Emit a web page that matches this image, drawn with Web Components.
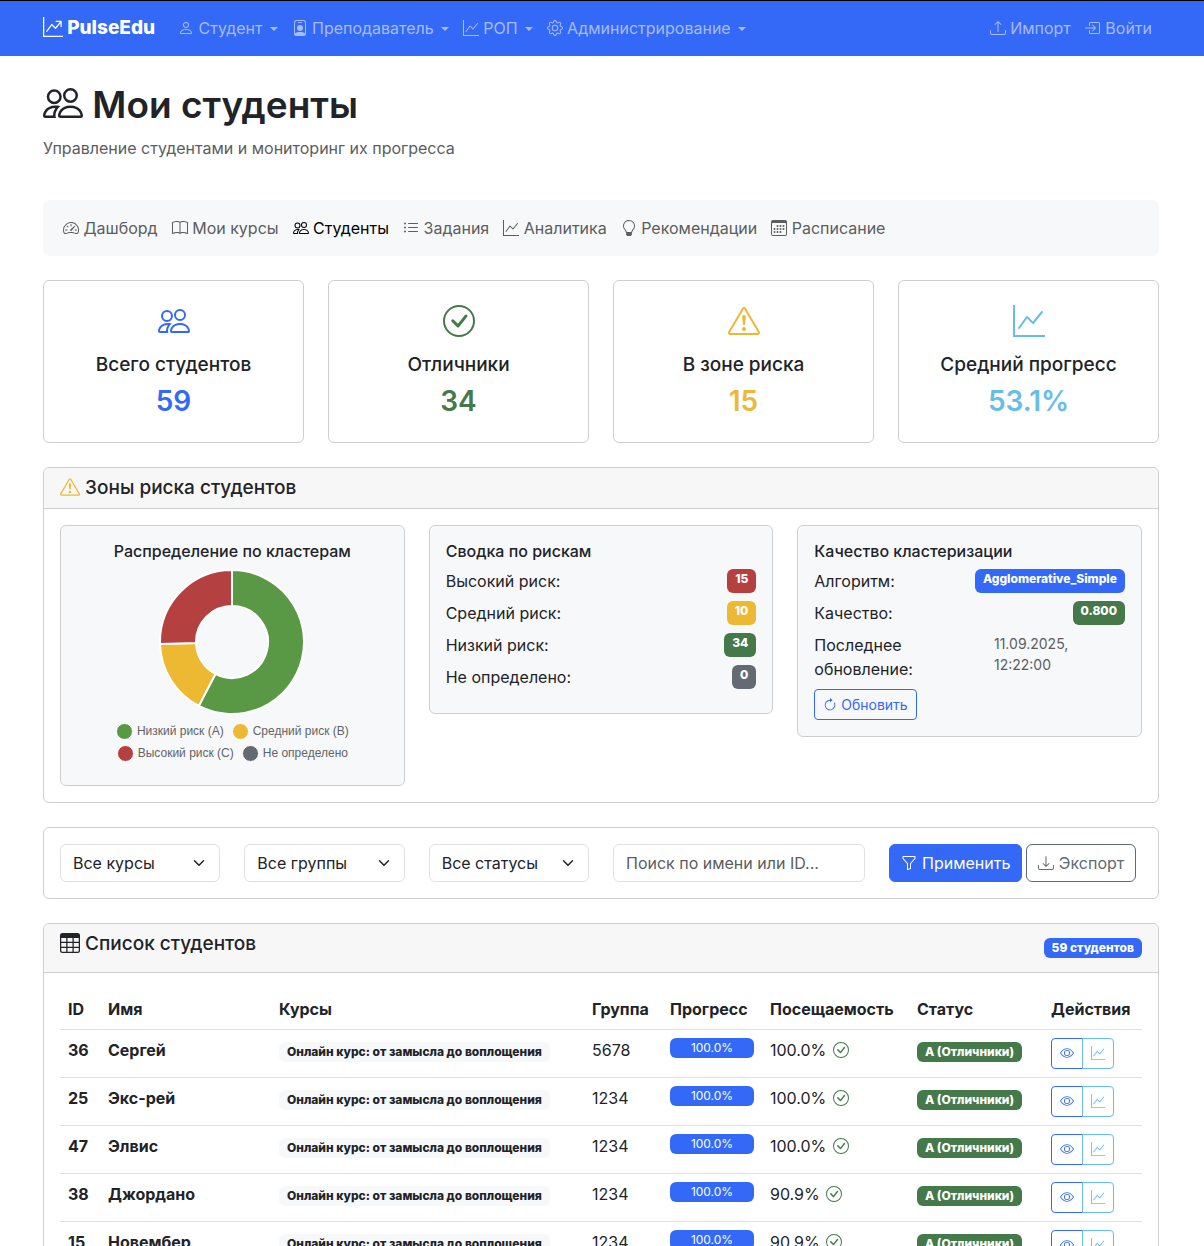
<!DOCTYPE html>
<html lang="ru">
<head>
<meta charset="utf-8">
<meta name="viewport" content="width=device-width, initial-scale=1">
<title>PulseEdu — Мои студенты</title>
<style>
:root{--blue:#3468f7;--green:#45794a;--yellow:#edb932;--red:#b44040;--gray:#646a71;--info:#66bdea;--ink:#212328;--muted:#5b5d60;--soft:#f7f8fa;--line:#cdcecf;--rule:#dfe1e4}
body{margin:0;background:#fff;color:var(--ink);font:400 16px/24px Inter,"Noto Sans",sans-serif}
</style>
</head>
<body>
<pulse-app></pulse-app>
<script>
const ICONS={
people:'<path d="M15 14s1 0 1-1-1-4-5-4-5 3-5 4 1 1 1 1zm-7.978-1L7 12.996c.001-.264.167-1.03.76-1.72C8.312 10.629 9.282 10 11 10c1.717 0 2.687.63 3.24 1.276.593.69.758 1.457.76 1.72l-.008.002-.014.002zM11 7a2 2 0 1 0 0-4 2 2 0 0 0 0 4m3-2a3 3 0 1 1-6 0 3 3 0 0 1 6 0M6.936 9.28a6 6 0 0 0-1.23-.247A7 7 0 0 0 5 9c-4 0-5 3-5 4q0 1 1 1h4.216A2.24 2.24 0 0 1 5 13c0-1.01.377-2.042 1.09-2.904.243-.294.526-.569.846-.816M4.92 10A5.5 5.5 0 0 0 4 13H1c0-.26.164-1.03.76-1.724.545-.636 1.492-1.256 3.16-1.275ZM1.5 5.5a3 3 0 1 1 6 0 3 3 0 0 1-6 0m3-2a2 2 0 1 0 0 4 2 2 0 0 0 0-4"/>',
person:'<path d="M8 8a3 3 0 1 0 0-6 3 3 0 0 0 0 6m2-3a2 2 0 1 1-4 0 2 2 0 0 1 4 0m4 8c0 1-1 1-1 1H3s-1 0-1-1 1-4 6-4 6 3 6 4m-1-.004c-.001-.246-.154-.986-.832-1.664C11.516 10.68 10.289 10 8 10s-3.516.68-4.168 1.332c-.678.678-.83 1.418-.832 1.664z"/>',
badge:'<path d="M6.5 2a.5.5 0 0 0 0 1h3a.5.5 0 0 0 0-1zM11 8a3 3 0 1 1-6 0 3 3 0 0 1 6 0"/><path d="M4.5 0A2.5 2.5 0 0 0 2 2.5V14a2 2 0 0 0 2 2h8a2 2 0 0 0 2-2V2.5A2.5 2.5 0 0 0 11.5 0zM3 2.5A1.5 1.5 0 0 1 4.5 1h7A1.5 1.5 0 0 1 13 2.5v10.795a4.2 4.2 0 0 0-.776-.492C11.392 12.387 10.063 12 8 12s-3.392.387-4.224.803a4.2 4.2 0 0 0-.776.492z"/>',
graph:'<path fill-rule="evenodd" d="M0 0h1v15h15v1H0zm14.817 3.113a.5.5 0 0 1 .07.704l-4.5 5.5a.5.5 0 0 1-.74.037L7.06 6.767l-3.656 5.027a.5.5 0 0 1-.808-.588l4-5.5a.5.5 0 0 1 .758-.06l2.609 2.61 4.15-5.073a.5.5 0 0 1 .704-.07"/>',
graphArrow:'<path fill-rule="evenodd" d="M0 0h1v15h15v1H0zm10 3.5a.5.5 0 0 1 .5-.5h4a.5.5 0 0 1 .5.5v4a.5.5 0 0 1-1 0V4.9l-3.613 4.417a.5.5 0 0 1-.74.037L7.06 6.767l-3.656 5.027a.5.5 0 0 1-.808-.588l4-5.5a.5.5 0 0 1 .758-.06l2.609 2.61L13.445 4H10.5a.5.5 0 0 1-.5-.5"/>',
gear:'<path d="M8 4.754a3.246 3.246 0 1 0 0 6.492 3.246 3.246 0 0 0 0-6.492M5.754 8a2.246 2.246 0 1 1 4.492 0 2.246 2.246 0 0 1-4.492 0"/><path d="M9.796 1.343c-.527-1.79-3.065-1.79-3.592 0l-.094.319a.873.873 0 0 1-1.255.52l-.292-.16c-1.64-.892-3.433.902-2.54 2.541l.159.292a.873.873 0 0 1-.52 1.255l-.319.094c-1.79.527-1.79 3.065 0 3.592l.319.094a.873.873 0 0 1 .52 1.255l-.16.292c-.892 1.64.901 3.434 2.541 2.54l.292-.159a.873.873 0 0 1 1.255.52l.094.319c.527 1.79 3.065 1.79 3.592 0l.094-.319a.873.873 0 0 1 1.255-.52l.292.16c1.64.893 3.434-.902 2.54-2.541l-.159-.292a.873.873 0 0 1 .52-1.255l.319-.094c1.79-.527 1.79-3.065 0-3.592l-.319-.094a.873.873 0 0 1-.52-1.255l.16-.292c.893-1.64-.902-3.433-2.541-2.54l-.292.159a.873.873 0 0 1-1.255-.52zm-2.633.283c.246-.835 1.428-.835 1.674 0l.094.319a1.873 1.873 0 0 0 2.693 1.115l.291-.16c.764-.415 1.6.42 1.184 1.185l-.159.292a1.873 1.873 0 0 0 1.116 2.692l.318.094c.835.246.835 1.428 0 1.674l-.319.094a1.873 1.873 0 0 0-1.115 2.693l.16.291c.415.764-.42 1.6-1.185 1.184l-.291-.159a1.873 1.873 0 0 0-2.693 1.116l-.094.318c-.246.835-1.428.835-1.674 0l-.094-.319a1.873 1.873 0 0 0-2.692-1.115l-.292.16c-.764.415-1.6-.42-1.184-1.185l.159-.291A1.873 1.873 0 0 0 1.945 8.93l-.319-.094c-.835-.246-.835-1.428 0-1.674l.319-.094A1.873 1.873 0 0 0 3.06 4.377l-.16-.292c-.415-.764.42-1.6 1.185-1.184l.292.159a1.873 1.873 0 0 0 2.692-1.115z"/>',
upload:'<path d="M.5 9.9a.5.5 0 0 1 .5.5v2.5a1 1 0 0 0 1 1h12a1 1 0 0 0 1-1v-2.5a.5.5 0 0 1 1 0v2.5a2 2 0 0 1-2 2H2a2 2 0 0 1-2-2v-2.5a.5.5 0 0 1 .5-.5"/><path d="M7.646 1.146a.5.5 0 0 1 .708 0l3 3a.5.5 0 0 1-.708.708L8.5 2.707V11.5a.5.5 0 0 1-1 0V2.707L5.354 4.854a.5.5 0 1 1-.708-.708z"/>',
download:'<path d="M.5 9.9a.5.5 0 0 1 .5.5v2.5a1 1 0 0 0 1 1h12a1 1 0 0 0 1-1v-2.5a.5.5 0 0 1 1 0v2.5a2 2 0 0 1-2 2H2a2 2 0 0 1-2-2v-2.5a.5.5 0 0 1 .5-.5"/><path d="M7.646 11.854a.5.5 0 0 0 .708 0l3-3a.5.5 0 0 0-.708-.708L8.5 10.293V1.5a.5.5 0 0 0-1 0v8.793L5.354 8.146a.5.5 0 1 0-.708.708z"/>',
login:'<path fill-rule="evenodd" d="M6 3.5a.5.5 0 0 1 .5-.5h8a.5.5 0 0 1 .5.5v9a.5.5 0 0 1-.5.5h-8a.5.5 0 0 1-.5-.5v-2a.5.5 0 0 0-1 0v2A1.5 1.5 0 0 0 6.5 14h8a1.5 1.5 0 0 0 1.5-1.5v-9A1.5 1.5 0 0 0 14.5 2h-8A1.5 1.5 0 0 0 5 3.5v2a.5.5 0 0 0 1 0z" transform="translate(-1 0)"/><path fill-rule="evenodd" d="M11.854 8.354a.5.5 0 0 0 0-.708l-3-3a.5.5 0 1 0-.708.708L10.293 7.5H1.5a.5.5 0 0 0 0 1h8.793l-2.147 2.146a.5.5 0 0 0 .708.708z" transform="translate(-1 0)"/>',
speed:'<path d="M8 4a.5.5 0 0 1 .5.5V6a.5.5 0 0 1-1 0V4.5A.5.5 0 0 1 8 4M3.732 5.732a.5.5 0 0 1 .707 0l.915.914a.5.5 0 1 1-.708.708l-.914-.915a.5.5 0 0 1 0-.707M2 10a.5.5 0 0 1 .5-.5h1.586a.5.5 0 0 1 0 1H2.5A.5.5 0 0 1 2 10m9.5 0a.5.5 0 0 1 .5-.5h1.5a.5.5 0 0 1 0 1H12a.5.5 0 0 1-.5-.5m.754-4.246a.39.39 0 0 0-.527-.02L7.547 9.31a.91.91 0 1 0 1.302 1.258l3.434-4.297a.39.39 0 0 0-.029-.518z"/><path fill-rule="evenodd" d="M0 10a8 8 0 1 1 15.547 2.661c-.442 1.253-1.845 1.602-2.932 1.25C11.309 13.488 9.475 13 8 13c-1.474 0-3.31.488-4.615.911-1.087.352-2.49.003-2.932-1.25A8 8 0 0 1 0 10m8-7a7 7 0 0 0-6.603 9.329c.203.575.923.876 1.68.63C4.397 12.533 6.358 12 8 12s3.604.532 4.923.96c.757.245 1.477-.056 1.68-.631A7 7 0 0 0 8 3"/>',
book:'<path d="M1 2.828c.885-.37 2.154-.769 3.388-.893 1.33-.134 2.458.063 3.112.752v9.746c-.935-.53-2.12-.603-3.213-.493-1.18.12-2.37.461-3.287.811zm7.5-.141c.654-.689 1.782-.886 3.112-.752 1.234.124 2.503.523 3.388.893v9.923c-.918-.35-2.107-.692-3.287-.81-1.094-.111-2.278-.039-3.213.492zM8 1.783C7.015.936 5.587.81 4.287.94c-1.514.153-3.042.672-3.994 1.105A.5.5 0 0 0 0 2.5v11a.5.5 0 0 0 .707.455c.882-.4 2.303-.881 3.68-1.02 1.409-.142 2.59.087 3.223.877a.5.5 0 0 0 .78 0c.633-.79 1.814-1.019 3.222-.877 1.378.139 2.8.62 3.681 1.02A.5.5 0 0 0 16 13.5v-11a.5.5 0 0 0-.293-.455c-.952-.433-2.48-.952-3.994-1.105C10.413.809 8.985.936 8 1.783"/>',
list:'<path fill-rule="evenodd" d="M5 11.5a.5.5 0 0 1 .5-.5h9a.5.5 0 0 1 0 1h-9a.5.5 0 0 1-.5-.5m0-4a.5.5 0 0 1 .5-.5h9a.5.5 0 0 1 0 1h-9a.5.5 0 0 1-.5-.5m0-4a.5.5 0 0 1 .5-.5h9a.5.5 0 0 1 0 1h-9a.5.5 0 0 1-.5-.5m-3 1a1 1 0 1 0 0-2 1 1 0 0 0 0 2m0 4a1 1 0 1 0 0-2 1 1 0 0 0 0 2m0 4a1 1 0 1 0 0-2 1 1 0 0 0 0 2"/>',
bulb:'<path d="M2 6a6 6 0 1 1 10.174 4.31c-.203.196-.359.4-.453.619l-.762 1.769A.5.5 0 0 1 10.5 13a.5.5 0 0 1 0 1 .5.5 0 0 1 0 1l-.224.447a1 1 0 0 1-.894.553H6.618a1 1 0 0 1-.894-.553L5.5 15a.5.5 0 0 1 0-1 .5.5 0 0 1 0-1 .5.5 0 0 1-.46-.302l-.761-1.77a2 2 0 0 0-.453-.618A5.98 5.98 0 0 1 2 6m6-5a5 5 0 0 0-3.479 8.592c.263.254.514.564.676.941L5.83 12h4.342l.632-1.467c.162-.377.413-.687.676-.941A5 5 0 0 0 8 1"/>',
calendar:'<path d="M14 0H2a2 2 0 0 0-2 2v12a2 2 0 0 0 2 2h12a2 2 0 0 0 2-2V2a2 2 0 0 0-2-2M1 3.857C1 3.384 1.448 3 2 3h12c.552 0 1 .384 1 .857v10.286c0 .473-.448.857-1 .857H2c-.552 0-1-.384-1-.857z"/><path d="M6.5 7a1 1 0 1 0 0-2 1 1 0 0 0 0 2m3 0a1 1 0 1 0 0-2 1 1 0 0 0 0 2m3 0a1 1 0 1 0 0-2 1 1 0 0 0 0 2m-9 3a1 1 0 1 0 0-2 1 1 0 0 0 0 2m3 0a1 1 0 1 0 0-2 1 1 0 0 0 0 2m3 0a1 1 0 1 0 0-2 1 1 0 0 0 0 2m3 0a1 1 0 1 0 0-2 1 1 0 0 0 0 2m-9 3a1 1 0 1 0 0-2 1 1 0 0 0 0 2m3 0a1 1 0 1 0 0-2 1 1 0 0 0 0 2m3 0a1 1 0 1 0 0-2 1 1 0 0 0 0 2"/>',
check:'<path d="M8 15A7 7 0 1 1 8 1a7 7 0 0 1 0 14m0 1A8 8 0 1 0 8 0a8 8 0 0 0 0 16"/><path d="m10.97 4.97-.02.022-3.473 4.425-2.093-2.094a.75.75 0 0 0-1.06 1.06L6.97 11.03a.75.75 0 0 0 1.079-.02l3.992-4.99a.75.75 0 0 0-1.071-1.05"/>',
warn:'<path d="M7.938 2.016A.13.13 0 0 1 8.002 2a.13.13 0 0 1 .063.016.15.15 0 0 1 .054.057l6.857 11.667c.036.06.035.124.002.183a.2.2 0 0 1-.054.06.1.1 0 0 1-.066.017H1.146a.1.1 0 0 1-.066-.017.2.2 0 0 1-.054-.06.18.18 0 0 1 .002-.183L7.884 2.073a.15.15 0 0 1 .054-.057m1.044-.45a1.13 1.13 0 0 0-1.96 0L.165 13.233c-.457.778.091 1.767.98 1.767h13.713c.889 0 1.438-.99.98-1.767z"/><path d="M7.002 12a1 1 0 1 1 2 0 1 1 0 0 1-2 0M7.1 5.995a.905.905 0 1 1 1.8 0l-.35 3.507a.552.552 0 0 1-1.1 0z"/>',
refresh:'<path fill-rule="evenodd" d="M8 3a5 5 0 1 0 4.546 2.914.5.5 0 0 1 .908-.417A6 6 0 1 1 8 2z"/><path d="M8 4.466V.534a.25.25 0 0 1 .41-.192l2.36 1.966c.12.1.12.284 0 .384L8.41 4.658A.25.25 0 0 1 8 4.466"/>',
funnel:'<path d="M1.5 1.5A.5.5 0 0 1 2 1h12a.5.5 0 0 1 .5.5v2a.5.5 0 0 1-.128.334L10 8.692V13.5a.5.5 0 0 1-.342.474l-3 1A.5.5 0 0 1 6 14.5V8.692L1.628 3.834A.5.5 0 0 1 1.5 3.5zm1 .5v1.308l4.372 4.858A.5.5 0 0 1 7 8.5v5.306l2-.666V8.5a.5.5 0 0 1 .128-.334L13.5 3.308V2z"/>',
table:'<path d="M0 2a2 2 0 0 1 2-2h12a2 2 0 0 1 2 2v12a2 2 0 0 1-2 2H2a2 2 0 0 1-2-2zm15 2h-4v3h4zm0 4h-4v3h4zm0 4h-4v3h3a1 1 0 0 0 1-1zm-5 3v-3H6v3zm-5 0v-3H1v2a1 1 0 0 0 1 1zm-4-4h4V8H1zm0-4h4V4H1zm5-3v3h4V4zm4 4H6v3h4z"/>',
eye:'<path d="M16 8s-3-5.5-8-5.5S0 8 0 8s3 5.5 8 5.5S16 8 16 8M1.173 8a13 13 0 0 1 1.66-2.043C4.12 4.668 5.88 3.5 8 3.5s3.879 1.168 5.168 2.457A13 13 0 0 1 14.828 8q-.086.13-.195.288c-.335.48-.83 1.12-1.465 1.755C11.879 11.332 10.119 12.5 8 12.5s-3.879-1.168-5.168-2.457A13 13 0 0 1 1.172 8z"/><path d="M8 5.5a2.5 2.5 0 1 0 0 5 2.5 2.5 0 0 0 0-5M4.5 8a3.5 3.5 0 1 1 7 0 3.5 3.5 0 0 1-7 0"/>',
chevron:'<path fill="none" stroke="currentColor" stroke-linecap="round" stroke-linejoin="round" stroke-width="2" d="m2 5 6 6 6-6"/>'
};
const define=(name,css,html)=>customElements.define(name,class extends HTMLElement{
  constructor(){super();this.attachShadow({mode:'open'});}
  connectedCallback(){
    if(this.shadowRoot.childNodes.length)return;
    const t=document.createElement('template');
    t.innerHTML='<style>*{box-sizing:border-box}'+css+'</style>'+(typeof html==='function'?html(this):html);
    this.shadowRoot.append(t.content.cloneNode(true));
  }
});
const attr=(el,n)=>el.getAttribute(n)||'';

define('pe-icon',':host{display:inline-block;width:1em;height:1em;vertical-align:-.125em}svg{display:block;width:100%;height:100%}',
  el=>`<svg viewBox="0 0 16 16" fill="currentColor" aria-hidden="true">${ICONS[attr(el,'name')]}</svg>`);

define('pe-badge',':host{display:inline-block;padding:4px 8px;border-radius:6px;background:var(--blue);color:#fff;font-size:12px;font-weight:800;line-height:12px;text-align:center;white-space:nowrap}:host([tone=red]){background:var(--red)}:host([tone=yellow]){background:var(--yellow)}:host([tone=green]){background:var(--green)}:host([tone=gray]){background:var(--gray)}:host([tone=light]){background:var(--soft);color:var(--ink)}','<slot></slot>');

define('pe-link',`:host{display:block}a{display:block;padding:8px 7px;color:inherit;text-decoration:none;white-space:nowrap}
.caret{display:inline-block;margin-left:7px;vertical-align:3px;border:4px solid transparent;border-top-color:currentColor;border-bottom:0}`,
  el=>`<a href="#"><pe-icon name="${attr(el,'icon')}"></pe-icon> <slot></slot>${el.hasAttribute('menu')?'<span class="caret"></span>':''}</a>`);

define('pe-navbar',`:host{display:block;background:var(--blue);border-top:1px solid #000}
nav{display:flex;align-items:center;padding:7px 45px 8px 43px;color:#a6bcfb}
.brand{color:#fff;font-size:19px;font-weight:800;line-height:30px;margin-right:16px;text-decoration:none}.brand pe-icon{font-size:20px}
.menu{display:flex}.end{margin-left:auto}`,
`<nav><a class="brand" href="#"><pe-icon name="graphArrow"></pe-icon> PulseEdu</a>
<div class="menu"><pe-link icon="person" menu>Студент</pe-link><pe-link icon="badge" menu>Преподаватель</pe-link><pe-link icon="graph" menu>РОП</pe-link><pe-link icon="gear" menu>Администрирование</pe-link></div>
<div class="menu end"><pe-link icon="upload">Импорт</pe-link><pe-link icon="login">Войти</pe-link></div></nav>`);

define('pe-heading',':host{display:block}h1{margin:0 0 6px;font-size:37px;line-height:50px;font-weight:600}h1 pe-icon{font-size:40px}p{margin:0;color:var(--muted)}',
`<h1><pe-icon name="people"></pe-icon> <slot></slot></h1><p><slot name="lead"></slot></p>`);

define('pe-subnav',':host{display:block}nav{display:flex;padding:8px 13px;border-radius:6px;background:var(--soft);color:var(--muted)}.on{color:#000}',
`<nav><pe-link icon="speed">Дашборд</pe-link><pe-link icon="book">Мои курсы</pe-link><pe-link class="on" icon="people">Студенты</pe-link><pe-link icon="list">Задания</pe-link><pe-link icon="graph">Аналитика</pe-link><pe-link icon="bulb">Рекомендации</pe-link><pe-link icon="calendar">Расписание</pe-link></nav>`);

define('pe-stat',`:host{display:block;border:1px solid var(--line);border-radius:6px;padding:24px 16px;text-align:center}
.ic{display:block;font-size:32px;line-height:32px;height:32px;margin-bottom:16px}
h5{margin:0 0 8px;font-size:19px;line-height:24px;font-weight:500}.num{display:block;font-size:28px;line-height:33px;font-weight:600}.ic,.num{color:var(--tone)}`,
 el=>`<span class="ic"><pe-icon name="${attr(el,'icon')}"></pe-icon></span><h5><slot></slot></h5><span class="num">${attr(el,'value')}</span>`);

define('pe-panel',`:host{display:block;border:1px solid var(--line);border-radius:6px}
header{display:flex;align-items:center;justify-content:space-between;padding:8px 16px;background:#f7f7f7;border-bottom:1px solid var(--line);border-radius:5px 5px 0 0}
header.tall h5{margin-bottom:8px}
h5{margin:0;font-size:19px;line-height:24px;font-weight:500}h5 pe-icon{font-size:20px;color:var(--tone,inherit)}.body{padding:16px}`,
 el=>(el.hasAttribute('heading')?`<header class="${el.hasAttribute('tall')?'tall':''}"><h5><pe-icon name="${attr(el,'icon')}"></pe-icon> ${attr(el,'heading')}</h5><slot name="extra"></slot></header>`:'')+'<div class="body"><slot></slot></div>');

define('pe-tile',`:host{display:block;padding:16px;border:1px solid var(--line);border-radius:6px;background:var(--soft)}h6{margin:0 0 8px;font-size:16px;line-height:19px;font-weight:500}:host([centered]) h6{text-align:center}`,
 el=>`<h6>${attr(el,'heading')}</h6><slot></slot>`);

define('pe-row',':host{display:flex;justify-content:space-between;margin-bottom:8px}','<slot></slot>');

define('pe-donut',`:host{display:block;height:200px;font:12px/22px "Liberation Sans",sans-serif;color:#626466}
svg{display:block;width:146px;height:146px;margin:0 auto 5px}
.legend{display:flex;justify-content:center;gap:8px}.legend span{display:flex;align-items:center;gap:4px}
i{width:17px;height:17px;border:1px solid #fff;border-radius:50%;background:var(--c)}`,()=>{
 const pt=(r,a)=>{const t=a*Math.PI/180;return `${(73+r*Math.sin(t)).toFixed(2)} ${(73-r*Math.cos(t)).toFixed(2)}`;};
 let a=0;
 const arcs=[[34,'#599945'],[10,'#edb932'],[15,'#b44040']].map(([n,c])=>{const b=a+n/59*360,big=b-a>180?1:0;
  const d=`M${pt(72,a)}A72 72 0 ${big} 1 ${pt(72,b)}L${pt(36,b)}A36 36 0 ${big} 0 ${pt(36,a)}Z`;a=b;
  return `<path d="${d}" fill="${c}" stroke="#fff" stroke-width="2" stroke-linejoin="bevel"/>`;}).join('');
 return `<svg viewBox="0 0 146 146" role="img" aria-label="Распределение по кластерам">${arcs}</svg>
 <div class="legend"><span><i style="--c:#599945"></i>Низкий риск (A)</span><span><i style="--c:#edb932"></i>Средний риск (B)</span></div>
 <div class="legend"><span><i style="--c:#b44040"></i>Высокий риск (C)</span><span><i style="--c:#646a71"></i>Не определено</span></div>`;});

define('pe-button',`:host{display:inline-block}button{display:block;padding:6px 11px;border:1px solid var(--gray);border-radius:6px;background:transparent;color:var(--gray);font:inherit;white-space:nowrap}
:host([kind=primary]) button{background:var(--blue);border-color:var(--blue);color:#fff}
:host([small]) button{padding:4px 8px;border-color:var(--blue);border-radius:4px;color:var(--blue);font-size:14px;line-height:21px}`,
 el=>`<button type="button"><pe-icon name="${attr(el,'icon')}"></pe-icon> <slot></slot></button>`);

define('pe-select',`:host{display:grid;align-items:center}select,pe-icon{grid-area:1/1}
select{appearance:none;width:100%;height:38px;padding:6px 36px 6px 12px;border:1px solid var(--rule);border-radius:6px;background:#fff;color:var(--ink);font:inherit}
pe-icon{justify-self:end;width:16px;height:12px;margin-right:13px;pointer-events:none}`,
 el=>`<select aria-label="${attr(el,'label')}"><option>${attr(el,'label')}</option></select><pe-icon name="chevron"></pe-icon>`);

define('pe-filters',`:host{display:grid;grid-template-columns:repeat(12,minmax(0,1fr));gap:24px}
pe-select{grid-column:span 2}.wide{grid-column:span 3}.actions{display:flex;gap:4px}
input{width:100%;height:38px;padding:6px 12px;border:1px solid var(--rule);border-radius:6px;background:#fff;color:var(--ink);font:inherit}input::placeholder{color:#5b5d60;opacity:1}`,
`<pe-select label="Все курсы"></pe-select><pe-select label="Все группы"></pe-select><pe-select label="Все статусы"></pe-select>
<input class="wide" type="text" aria-label="Поиск" placeholder="Поиск по имени или ID...">
<div class="wide actions"><pe-button kind="primary" icon="funnel">Применить</pe-button><pe-button icon="download">Экспорт</pe-button></div>`);

define('pe-actions',`:host{display:flex}button{width:32px;height:31px;padding:0;border:1px solid var(--blue);border-radius:4px 0 0 4px;background:transparent;color:var(--blue);font-size:14px;line-height:21px}
button+button{border-color:var(--info);border-radius:0 4px 4px 0;color:var(--info);margin-left:-1px}`,
'<button type="button" aria-label="Просмотр"><pe-icon name="eye"></pe-icon></button><button type="button" aria-label="Прогресс"><pe-icon name="graph"></pe-icon></button>');

const STUDENTS=[['36','Сергей','5678','100.0%'],['25','Экс-рей','1234','100.0%'],['47','Элвис','1234','100.0%'],['38','Джордано','1234','90.9%'],['15','Новембер','1234','90.9%']];
define('pe-students',`:host{display:block}table{width:100%;table-layout:fixed;border-collapse:separate;border-spacing:0}
th,td{padding:8px;border-bottom:1px solid var(--rule);text-align:left;vertical-align:top;white-space:nowrap}th,b{font-weight:700}
.bar{height:20px;border-radius:6px;background:var(--blue);color:#fff;font-size:12px;line-height:20px;text-align:center}.ok{color:var(--green);margin-left:2px}`,
()=>`<table><colgroup>${[40,171,313,78,100,147,134,99].map(w=>`<col style="width:${w}px">`).join('')}</colgroup>
<thead><tr><th>ID</th><th>Имя</th><th>Курсы</th><th>Группа</th><th>Прогресс</th><th>Посещаемость</th><th>Статус</th><th>Действия</th></tr></thead><tbody>
${STUDENTS.map(([id,n,g,a])=>`<tr><td><b>${id}</b></td><td><b>${n}</b></td><td><pe-badge tone="light">Онлайн курс: от замысла до воплощения</pe-badge></td><td>${g}</td><td><div class="bar">100.0%</div></td><td>${a} <pe-icon class="ok" name="check"></pe-icon></td><td><pe-badge tone="green">A (Отличники)</pe-badge></td><td><pe-actions></pe-actions></td></tr>`).join('')}</tbody></table>`);

define('pulse-app',`:host{display:block}main{display:flex;flex-direction:column;gap:24px;padding:24px 45px 24px 43px}
pe-heading{margin-bottom:16px}.stats{display:grid;grid-template-columns:repeat(4,minmax(0,1fr));gap:24px}
.tiles{display:grid;grid-template-columns:repeat(3,minmax(0,1fr));gap:24px;align-items:start}
small{min-width:131px;font-size:14px;line-height:21px;color:var(--muted)}`,
`<pe-navbar></pe-navbar><main>
<pe-heading>Мои студенты<span slot="lead">Управление студентами и мониторинг их прогресса</span></pe-heading>
<pe-subnav></pe-subnav>
<section class="stats">
<pe-stat icon="people" value="59" style="--tone:var(--blue)">Всего студентов</pe-stat>
<pe-stat icon="check" value="34" style="--tone:var(--green)">Отличники</pe-stat>
<pe-stat icon="warn" value="15" style="--tone:var(--yellow)">В зоне риска</pe-stat>
<pe-stat icon="graph" value="53.1%" style="--tone:var(--info)">Средний прогресс</pe-stat></section>
<pe-panel icon="warn" heading="Зоны риска студентов" style="--tone:var(--yellow)"><div class="tiles">
<pe-tile centered heading="Распределение по кластерам"><pe-donut></pe-donut></pe-tile>
<pe-tile heading="Сводка по рискам"><pe-row><span>Высокий риск:</span><pe-badge tone="red">15</pe-badge></pe-row><pe-row><span>Средний риск:</span><pe-badge tone="yellow">10</pe-badge></pe-row><pe-row><span>Низкий риск:</span><pe-badge tone="green">34</pe-badge></pe-row><pe-row><span>Не определено:</span><pe-badge tone="gray">0</pe-badge></pe-row></pe-tile>
<pe-tile heading="Качество кластеризации"><pe-row><span>Алгоритм:</span><pe-badge>Agglomerative_Simple</pe-badge></pe-row><pe-row><span>Качество:</span><pe-badge tone="green">0.800</pe-badge></pe-row><pe-row><span>Последнее<br>обновление:</span><small>11.09.2025,<br>12:22:00</small></pe-row><pe-button small icon="refresh">Обновить</pe-button></pe-tile>
</div></pe-panel>
<pe-panel><pe-filters></pe-filters></pe-panel>
<pe-panel tall icon="table" heading="Список студентов"><pe-badge slot="extra">59 студентов</pe-badge><pe-students></pe-students></pe-panel>
</main>`);
</script>
</body>
</html>
